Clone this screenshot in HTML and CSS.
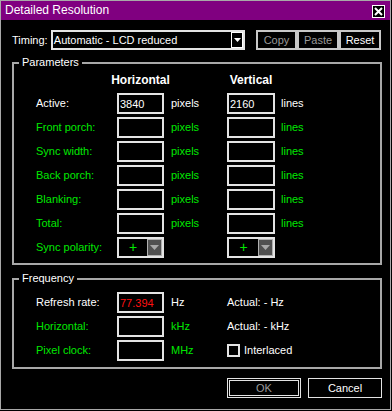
FILE: index.html
```html
<!DOCTYPE html>
<html lang="en">

<head>
    <meta charset="UTF-8">
    <meta name="viewport" content="width=device-width, initial-scale=1.0">
    <title>Detailed Resolution</title>
    <link rel="stylesheet" href="styles.css">
</head>

<body>
    <div class="window">
        <div class="titlebar">
            <span class="title">Detailed Resolution</span>
            <button class="close">
                <svg width="9" height="9" viewBox="0 0 9 9"><path d="M1 1L8 8M8 1L1 8" stroke="#fff" stroke-width="2"/></svg>
            </button>
        </div>
        <div class="content">
            <div class="timing-row">
                <label class="timing-label">Timing:</label>
                <div class="select">
                    <span class="select-text">Automatic - LCD reduced</span>
                    <span class="drop">
                        <svg width="7" height="4" viewBox="0 0 7 4"><path d="M0 0H7L3.5 4Z" fill="#fff"/></svg>
                    </span>
                </div>
                <div class="btn-group">
                    <button class="btn disabled">Copy</button>
                    <button class="btn disabled wide">Paste</button>
                    <button class="btn wide">Reset</button>
                </div>
            </div>

            <fieldset class="group params">
                <legend>Parameters</legend>
                <div class="grid">
                    <span></span>
                    <span class="col-head">Horizontal</span>
                    <span></span>
                    <span class="col-head">Vertical</span>
                    <span></span>

                    <span class="lbl">Active:</span>
                    <input class="field" type="text" value="3840">
                    <span class="unit">pixels</span>
                    <input class="field" type="text" value="2160">
                    <span class="unit v">lines</span>

                    <span class="lbl green">Front porch:</span>
                    <input class="field" type="text">
                    <span class="unit green">pixels</span>
                    <input class="field" type="text">
                    <span class="unit v green">lines</span>

                    <span class="lbl green">Sync width:</span>
                    <input class="field" type="text">
                    <span class="unit green">pixels</span>
                    <input class="field" type="text">
                    <span class="unit v green">lines</span>

                    <span class="lbl green">Back porch:</span>
                    <input class="field" type="text">
                    <span class="unit green">pixels</span>
                    <input class="field" type="text">
                    <span class="unit v green">lines</span>

                    <span class="lbl green">Blanking:</span>
                    <input class="field" type="text">
                    <span class="unit green">pixels</span>
                    <input class="field" type="text">
                    <span class="unit v green">lines</span>

                    <span class="lbl green">Total:</span>
                    <input class="field" type="text">
                    <span class="unit green">pixels</span>
                    <input class="field" type="text">
                    <span class="unit v green">lines</span>

                    <span class="lbl green">Sync polarity:</span>
                    <div class="combo">
                        <span class="plus">+</span>
                        <span class="combo-drop"><svg width="9" height="5" viewBox="0 0 9 5"><path d="M0 0H9L4.5 5Z" fill="#a8a8a8"/></svg></span>
                    </div>
                    <span></span>
                    <div class="combo">
                        <span class="plus">+</span>
                        <span class="combo-drop"><svg width="9" height="5" viewBox="0 0 9 5"><path d="M0 0H9L4.5 5Z" fill="#a8a8a8"/></svg></span>
                    </div>
                    <span></span>
                </div>
            </fieldset>

            <fieldset class="group freq">
                <legend>Frequency</legend>
                <div class="grid freq-grid">
                    <span class="lbl">Refresh rate:</span>
                    <input class="field red" type="text" value="77.394">
                    <span class="unit">Hz</span>
                    <span class="actual">Actual: - Hz</span>

                    <span class="lbl green">Horizontal:</span>
                    <input class="field" type="text">
                    <span class="unit green">kHz</span>
                    <span class="actual">Actual: - kHz</span>

                    <span class="lbl green">Pixel clock:</span>
                    <input class="field" type="text">
                    <span class="unit green">MHz</span>
                    <label class="check"><span class="box"></span>Interlaced</label>
                </div>
            </fieldset>

            <div class="actions">
                <button class="btn default disabled">OK</button>
                <button class="btn dialog">Cancel</button>
            </div>
        </div>
    </div>
</body>

</html>
```

FILE: styles.css
```css
body {
    margin: 0;
    background-color: #000;
    font-family: 'Liberation Sans', Arial, sans-serif;
    font-size: 11px;
    line-height: 13px;
    color: #fff;
}

.window {
    width: 391px;
    height: 410px;
    box-sizing: border-box;
    border: 1px solid #a8a8a8;
    background-color: #000;
}

.titlebar {
    height: 19px;
    background-color: #800080;
    display: flex;
    align-items: center;
    justify-content: space-between;
    padding: 0 5px 0 4px;
}

.title {
    font-size: 12px;
}

.close {
    width: 13px;
    height: 13px;
    box-sizing: border-box;
    margin-top: 2px;
    padding: 0;
    border: 1px solid #fff;
    background-color: #000;
    display: flex;
    align-items: center;
    justify-content: center;
}

.content {
    padding: 10px 9px 0 11px;
}

/* timing row */
.timing-row {
    display: flex;
    align-items: center;
    height: 20px;
}

.timing-label {
    width: 39px;
}

.select {
    width: 195px;
    height: 20px;
    box-sizing: border-box;
    border: 2px solid #e4e4e4;
    display: flex;
    align-items: center;
    padding-left: 1px;
}

.select-text {
    flex: 1;
}

.drop {
    width: 12px;
    height: 16px;
    box-sizing: border-box;
    margin-right: 0;
    border: 1px solid #fff;
    display: flex;
    align-items: center;
    justify-content: center;
}

.btn-group {
    display: flex;
    margin-left: 11px;
}

.btn {
    width: 41px;
    height: 20px;
    box-sizing: border-box;
    padding: 0;
    border: 2px solid #c8c8c8;
    background-color: #000;
    color: #fff;
    font-family: inherit;
    font-size: 11px;
}

.btn.wide {
    width: 42px;
}

.btn.disabled {
    color: #9a9a9a;
}

/* group boxes */
.group {
    width: 370px;
    box-sizing: border-box;
    margin: 6px 0 0;
    padding: 5px 0 5px 22px;
    border: 2px solid #a8a8a8;
    min-width: 0;
}

.group legend {
    padding: 0 3px;
    margin-left: -17px;
    line-height: 13px;
}

.freq {
    margin-top: 7px;
    padding-top: 7px;
    padding-bottom: 6px;
}

.grid {
    display: grid;
    grid-template-columns: 81px 47px 63px 48px 1fr;
    grid-template-rows: 16px repeat(7, 21px);
    row-gap: 3px;
    align-items: center;
}

.freq-grid {
    grid-template-columns: 81px 47px 63px 1fr;
    grid-template-rows: repeat(3, 21px);
}

.col-head {
    align-self: start;
    justify-self: center;
    font-weight: bold;
    font-size: 12px;
}

.green {
    color: #00e800;
}

.field {
    width: 100%;
    height: 21px;
    box-sizing: border-box;
    margin: 0;
    padding: 0 1px;
    border: 2px solid #e4e4e4;
    background-color: #000;
    color: #fff;
    font-family: inherit;
    font-size: 11px;
    outline: none;
}

.field.red {
    color: #ff1010;
}

.unit {
    padding-left: 7px;
}

.unit.v {
    padding-left: 6px;
}

.combo {
    height: 21px;
    box-sizing: border-box;
    border: 2px solid #e4e4e4;
    display: flex;
}

.plus {
    flex: 1;
    text-align: center;
    color: #00e800;
    font-size: 14px;
    line-height: 17px;
}

.combo-drop {
    width: 15px;
    box-sizing: border-box;
    border: 1px solid #b0b0b0;
    background-color: #505050;
    display: flex;
    align-items: center;
    justify-content: center;
}

.check {
    display: flex;
    align-items: center;
    gap: 4px;
}

.box {
    width: 13px;
    height: 13px;
    box-sizing: border-box;
    border: 2px solid #e4e4e4;
}

/* bottom buttons */
.actions {
    display: flex;
    justify-content: flex-end;
    gap: 7px;
    margin-top: 9px;
    width: 370px;
}

.btn.default {
    width: 74px;
    border: 3px double #e4e4e4;
}

.btn.dialog {
    width: 74px;
    border: 1px solid #e4e4e4;
}
```
